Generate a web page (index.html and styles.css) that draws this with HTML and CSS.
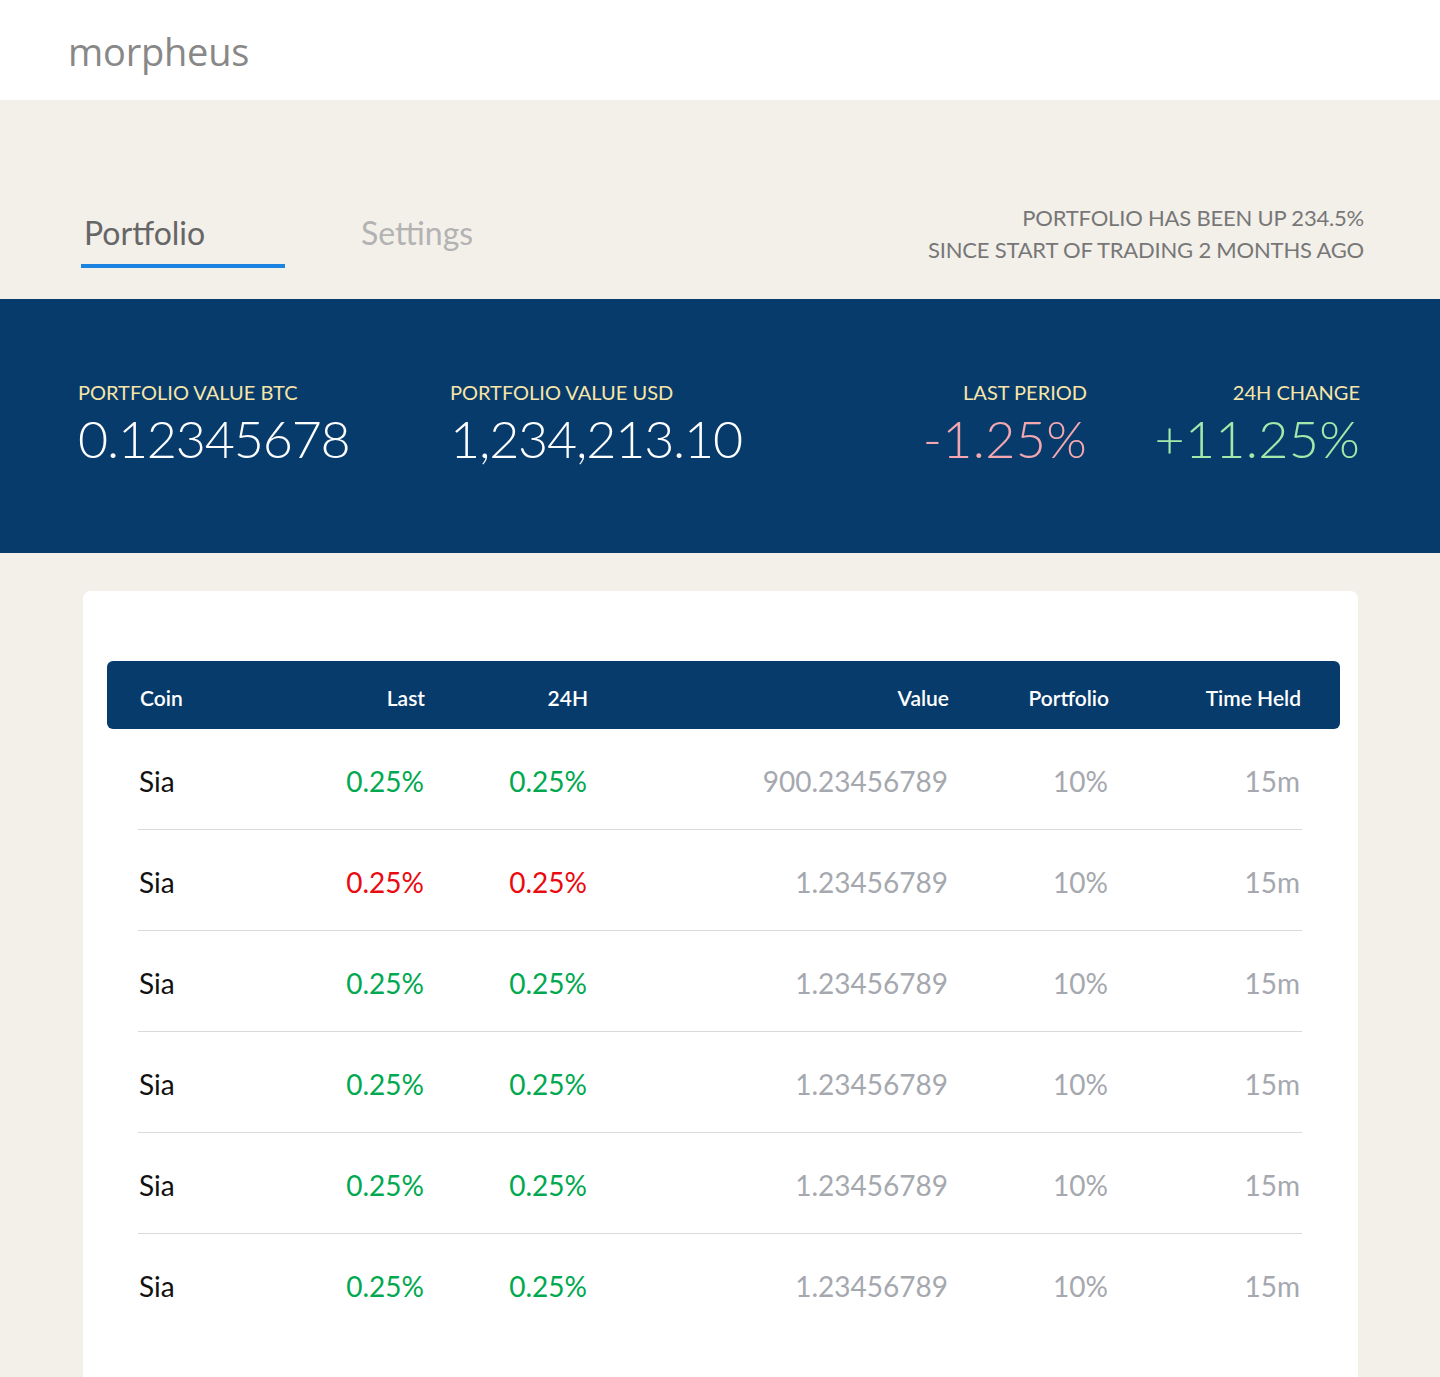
FILE: index.html
```html
<!DOCTYPE html>
<html lang="en">
<head>
<meta charset="utf-8">
<title>morpheus</title>
<link rel="stylesheet" href="styles.css">
</head>
<body>
<header class="topbar">
  <div class="logo">morpheus</div>
</header>

<section class="nav-area">
  <nav class="tabs">
    <a class="tab tab-active">Portfolio</a>
    <a class="tab">Settings</a>
  </nav>
  <p class="summary">PORTFOLIO HAS BEEN UP 234.5%<br>SINCE START OF TRADING 2 MONTHS AGO</p>
</section>

<section class="stats">
  <div class="stat-group">
    <div class="stat stat-btc">
      <div class="stat-label">PORTFOLIO VALUE BTC</div>
      <div class="stat-value">0.12345678</div>
    </div>
    <div class="stat">
      <div class="stat-label">PORTFOLIO VALUE USD</div>
      <div class="stat-value">1,234,213.10</div>
    </div>
  </div>
  <div class="stat-group stat-group-right">
    <div class="stat stat-right">
      <div class="stat-label">LAST PERIOD</div>
      <div class="stat-value negative">-1.25%</div>
    </div>
    <div class="stat stat-right">
      <div class="stat-label">24H CHANGE</div>
      <div class="stat-value positive">+11.25%</div>
    </div>
  </div>
</section>

<main class="content">
  <div class="card">
    <div class="table">
      <div class="thead grid">
        <div class="c-coin">Coin</div>
        <div class="c-num">Last</div>
        <div class="c-num">24H</div>
        <div class="c-num">Value</div>
        <div class="c-num">Portfolio</div>
        <div class="c-num">Time Held</div>
      </div>
      <div class="tbody">
        <div class="row grid">
          <div class="c-coin">Sia</div>
          <div class="c-num up">0.25%</div>
          <div class="c-num up">0.25%</div>
          <div class="c-num muted">900.23456789</div>
          <div class="c-num muted">10%</div>
          <div class="c-num muted">15m</div>
        </div>
        <div class="row grid">
          <div class="c-coin">Sia</div>
          <div class="c-num down">0.25%</div>
          <div class="c-num down">0.25%</div>
          <div class="c-num muted">1.23456789</div>
          <div class="c-num muted">10%</div>
          <div class="c-num muted">15m</div>
        </div>
        <div class="row grid">
          <div class="c-coin">Sia</div>
          <div class="c-num up">0.25%</div>
          <div class="c-num up">0.25%</div>
          <div class="c-num muted">1.23456789</div>
          <div class="c-num muted">10%</div>
          <div class="c-num muted">15m</div>
        </div>
        <div class="row grid">
          <div class="c-coin">Sia</div>
          <div class="c-num up">0.25%</div>
          <div class="c-num up">0.25%</div>
          <div class="c-num muted">1.23456789</div>
          <div class="c-num muted">10%</div>
          <div class="c-num muted">15m</div>
        </div>
        <div class="row grid">
          <div class="c-coin">Sia</div>
          <div class="c-num up">0.25%</div>
          <div class="c-num up">0.25%</div>
          <div class="c-num muted">1.23456789</div>
          <div class="c-num muted">10%</div>
          <div class="c-num muted">15m</div>
        </div>
        <div class="row grid">
          <div class="c-coin">Sia</div>
          <div class="c-num up">0.25%</div>
          <div class="c-num up">0.25%</div>
          <div class="c-num muted">1.23456789</div>
          <div class="c-num muted">10%</div>
          <div class="c-num muted">15m</div>
        </div>
      </div>
    </div>
  </div>
</main>
</body>
</html>
```

FILE: styles.css
```css
* { box-sizing: border-box; }

html, body {
  margin: 0;
  padding: 0;
}

body {
  background: #f3f0ea;
  font-family: "Lato", "Open Sans", sans-serif;
  color: #222;
  height: 1377px;
  overflow: hidden;
}

.topbar {
  height: 100px;
  background: #ffffff;
  padding-left: 68px;
  display: flex;
  align-items: flex-start;
}

.logo {
  font-family: "Open Sans", "Lato", sans-serif;
  font-size: 38px;
  line-height: 48px;
  margin-top: 27px;
  color: #888888;
  letter-spacing: -0.2px;
}

.nav-area {
  height: 199px;
  display: flex;
  justify-content: space-between;
  align-items: flex-end;
  padding: 0 76px 31px 81px;
}

.tabs {
  display: flex;
  gap: 73px;
}

.tab {
  display: block;
  width: 204px;
  padding: 0 3px 11px;
  font-size: 32px;
  line-height: 40px;
  color: #b3b3b3;
  border-bottom: 4px solid transparent;
}

.tab-active {
  color: #666666;
  border-bottom-color: #1b84e3;
}

.summary {
  margin: 0 0 2px;
  text-align: right;
  font-size: 22px;
  line-height: 32px;
  color: #777777;
  letter-spacing: -0.2px;
}

.stats {
  height: 254px;
  background: #073b6b;
  display: flex;
  justify-content: space-between;
  padding: 81px 80px 0 78px;
}

.stat-group {
  display: flex;
}

.stat-btc {
  width: 372px;
}

.stat-group-right {
  gap: 33px;
}

.stat-right {
  width: 240px;
  text-align: right;
}

.stat-label {
  font-size: 20px;
  line-height: 24px;
  color: #f8e6a8;
}

.stat-value {
  margin-top: 8px;
  font-size: 52px;
  line-height: 52px;
  font-weight: 300;
  color: #ffffff;
  letter-spacing: -1.2px;
}

.stat-right .stat-value {
  letter-spacing: 0.3px;
}

.stat-value.negative { color: #f4a7b1; }
.stat-value.positive { color: #a4e8aa; }

.content {
  padding: 38px 82px 0 83px;
}

.card {
  background: #ffffff;
  border-radius: 8px 8px 0 0;
  height: 786px;
  padding: 70px 18px 0 24px;
}

.grid {
  display: grid;
  grid-template-columns: 126px 160px 163px 361px 160px 192px;
  align-items: center;
}

.thead {
  height: 68px;
  padding: 4px 39px 0 32px;
  background: #073b6b;
  border-radius: 6px;
  color: #ffffff;
  font-size: 21px;
  font-weight: 600;
}

.tbody {
  margin: 0 38px 0 31px;
}

.row {
  height: 101px;
  padding-top: 3px;
  border-bottom: 1px solid #d9d9d9;
  font-size: 28px;
  line-height: 34px;
  color: #111111;
}

.row:last-child {
  border-bottom: none;
}

.c-coin { text-align: left; padding-left: 1px; }
.c-num { text-align: right; }

.up { color: #00a94f; }
.down { color: #ea0a10; }
.muted { color: #a5a8ae; }
```
